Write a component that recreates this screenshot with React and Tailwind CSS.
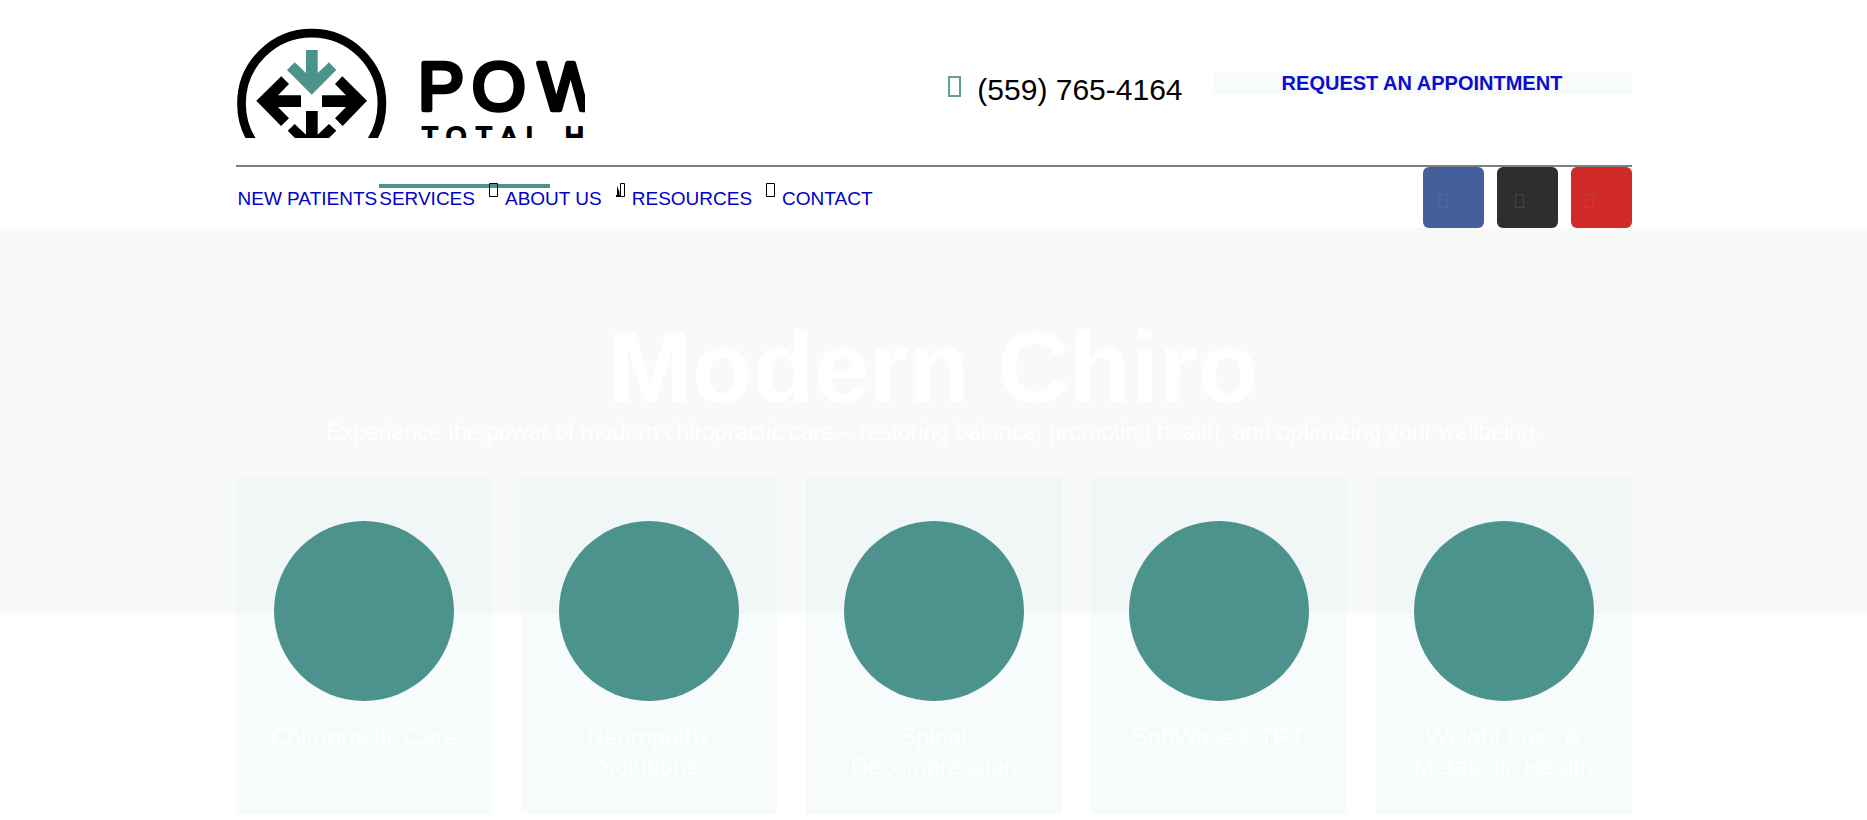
import React from 'react';
import clsx from 'clsx';

const navItems = [
	{ label: 'NEW PATIENTS', hasMenu: false },
	{ label: 'SERVICES', hasMenu: true, active: true },
	{ label: 'ABOUT US', hasMenu: true, marked: true },
	{ label: 'RESOURCES', hasMenu: true },
	{ label: 'CONTACT', hasMenu: false }
];

const socials = [
	{ name: 'Facebook', color: 'bg-[#455f9c]', box: 'border-[#466c98]', pad: 'pl-4' },
	{ name: 'TikTok', color: 'bg-[#2e2e2e]', box: 'border-[#344a48]', pad: 'pl-[18px]' },
	{ name: 'YouTube', color: 'bg-[#cf2a27]', box: 'border-[#b14540]', pad: 'pl-[14px]' }
];

const services = [
	'Chiropractic Care',
	'Neuropathy Solutions',
	'Spinal Decompression',
	'SoftWave® TRT',
	'Weight Loss & Metabolic Health'
];

function Logo() {
	return (
		<svg width="349" height="110" viewBox="0 0 349 110" role="img" aria-label="Logo">
			<circle cx="75.7" cy="75.4" r="70.2" fill="none" stroke="#000" strokeWidth="8.7" />
			<path
				d="M70 22H81.7V45L93 34.3L100.3 42L75.7 66.7L51 42L58.7 34.3L70 45Z"
				fill="#4c938d"
			/>
			<path d="M20.3 72.7L45.3 48.3L53 56L42 67.3H65V79H42L53 90.3L45 98Z" />
			<path d="M131 72.7L106.3 48.3L99 56L110 67.3H86V79H110L99 90.3L106.7 98Z" />
			<path d="M70 83H81.7V106.7L93 96L100.3 102.7L75.7 127L51.7 102.7L58.7 96L70 106.7Z" />
			<g
				fontFamily="Liberation Sans, Arial, sans-serif"
				stroke="#000"
				strokeLinejoin="round"
			>
				<text x="182 236 302" y="82" fontSize="69" strokeWidth="4.6">
					POW
				</text>
				<text x="186 210 240 264 290 308 329" y="117" fontSize="26" strokeWidth="2.2">
					TOTAL H
				</text>
			</g>
		</svg>
	);
}

function MenuMark({ marked }) {
	return (
		<svg width="9" height="14" viewBox="0 0 9 14" className="mr-[5px] ml-[14px]" aria-hidden="true">
			{marked ? (
				<>
					<path d="M1 3L3.5 9V12H5V14H0V12H1Z" />
					<path d="M4.5 .5H8.5V13.5H4.5Z" fill="none" stroke="#000" />
				</>
			) : (
				<path d="M.5 .5H8.5V13.5H.5Z" fill="none" stroke="#000" />
			)}
		</svg>
	);
}

function Header() {
	return (
		<header className="mx-auto w-full max-w-[1396px]">
			<div className="flex items-start justify-between border-b-2 border-[#7d827f] pt-7 pb-[27px]">
				<a href="#home">
					<Logo />
				</a>
				<div className="flex items-start gap-[30px]">
					<a href="tel:5597654164" className="mt-11 flex items-start gap-4">
						<span className="mt-1 h-[21px] w-[13px] border-2 border-[#5f9f99]" />
						<span className="text-[30px] leading-9 text-black">(559) 765-4164</span>
					</a>
					<a
						href="#appointment"
						className="mt-11 w-[419px] bg-[#f7fbfc] text-center text-[20px] leading-[22px] font-bold text-[#0c0cd0]"
					>
						REQUEST AN APPOINTMENT
					</a>
				</div>
			</div>
			<div className="flex items-start justify-between">
				<nav className="flex pt-4 text-[19px] leading-[31px] text-[#0000c8]">
					{navItems.map((item) => (
						<div key={item.label} className="relative flex pl-0.5">
							<a href="#menu">{item.label}</a>
							{item.active && (
								<span className="absolute top-px left-0.5 h-1 w-[171px] bg-[#4c938d]" />
							)}
							{item.hasMenu && (
								<span className="relative">
									<MenuMark marked={item.marked} />
								</span>
							)}
						</div>
					))}
				</nav>
				<div className="flex gap-[13px]">
					{socials.map((social) => (
						<a
							key={social.name}
							href="#social"
							aria-label={social.name}
							className={clsx('h-[61px] w-[61px] rounded-md pt-[27px]', social.color, social.pad)}
						>
							<span className={clsx('block h-[14px] w-[9px] border', social.box)} />
						</a>
					))}
				</div>
			</div>
		</header>
	);
}

function App() {
	return (
		<div className="bg-white pb-[6px] font-['Liberation_Sans',Arial,sans-serif]">
			<Header />
			<main>
				<section className="bg-[#f8faf9] pt-[89px] pb-[165px] text-center text-white">
					<h1 className="text-[100px] leading-[100px] font-bold">Modern Chiro</h1>
					<p className="text-[23px] leading-[31px]">
						Experience the power of modern chiropractic care – restoring balance, promoting
						health, and optimizing your wellbeing.
					</p>
				</section>
				<section className="relative mx-auto -mt-[135px] grid w-full max-w-[1396px] grid-cols-5 gap-[29px]">
					{services.map((service) => (
						<a
							key={service}
							href="#service"
							className="flex min-h-[336px] flex-col items-center bg-[#4b93b4]/4 px-5 pt-[43px] text-center text-white"
						>
							<span className="h-[180px] w-[180px] rounded-full bg-[#4c938d]" />
							<span className="mt-[21px] text-[24px] leading-[30px]">{service}</span>
						</a>
					))}
				</section>
			</main>
		</div>
	);
}

export default App;
